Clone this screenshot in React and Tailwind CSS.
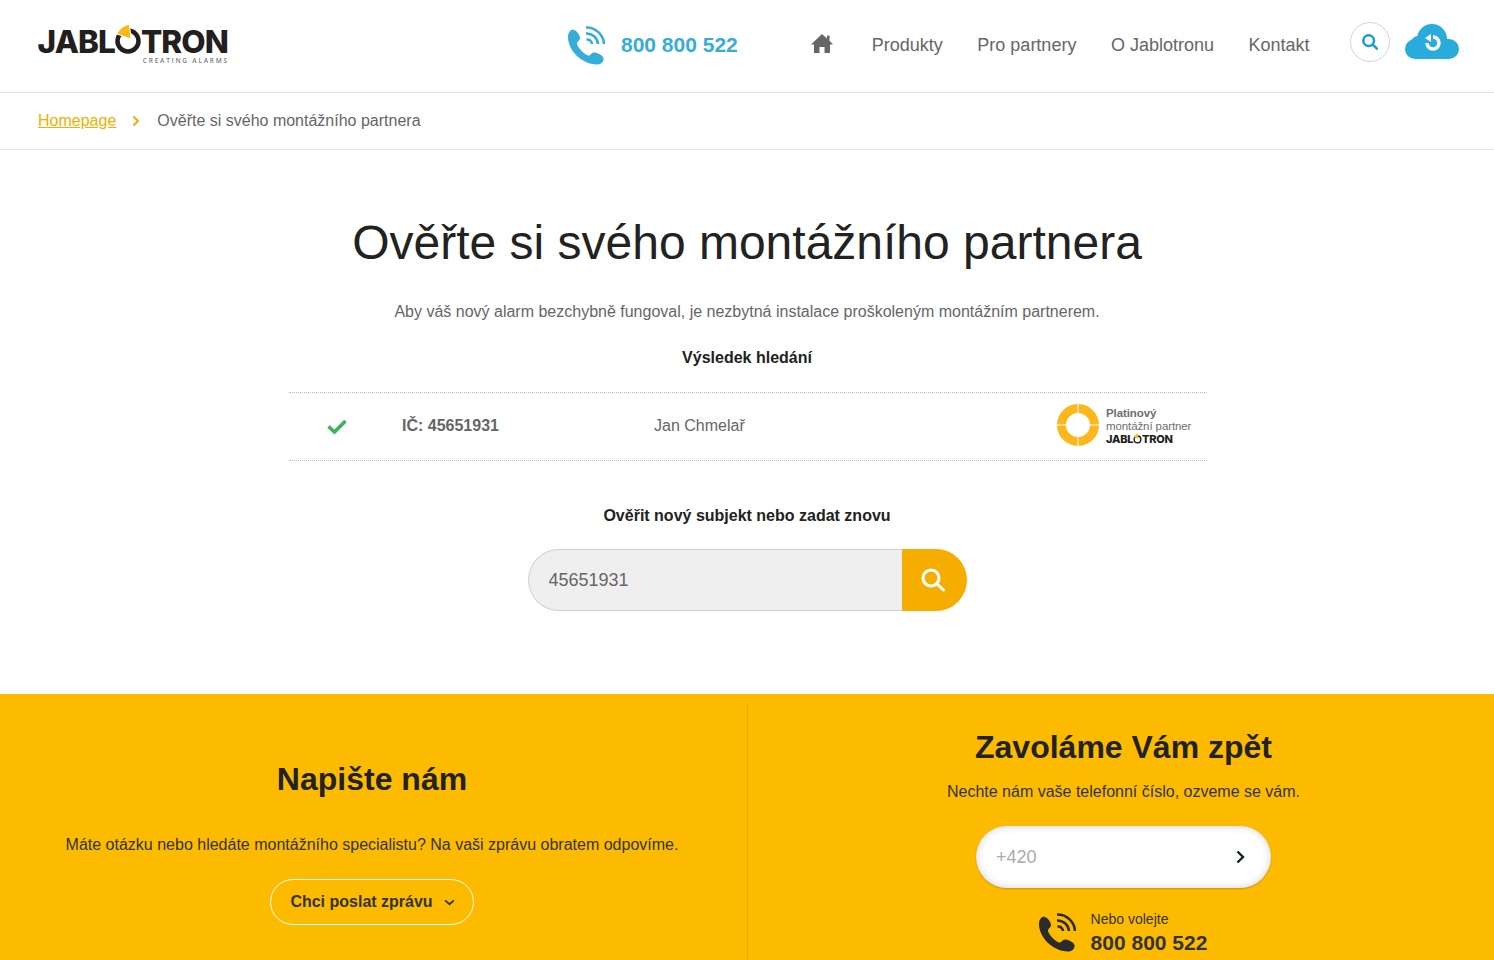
import React from "react";

function PhoneIcon({ className }) {
  return (
    <svg viewBox="0 0 38 39" className={className} fill="none">
      <path
        fill="currentColor"
        d="M6 3.500C3 4 1 7 1 11c0 13 13 27 29 27.500 4 0 7-2.500 6.500-6.500-.5-3-6.500-5.500-9.500-5.500-3 0-3 3.500-6 3-4-1.500-10-7.500-11-11.500-.5-2.500 3-3 3-6 0-3-4-8.500-7-8z"
      />
      <g stroke="currentColor" strokeWidth="2.6">
        <path d="M19 1.500A17.500 17.500 0 0 1 37 18" />
        <path d="M19 7.500A11.500 11.500 0 0 1 31 18" />
        <path d="M19.500 13.500A5 5 0 0 1 25 18" />
      </g>
    </svg>
  );
}

function SearchIcon({ className, width = 3 }) {
  return (
    <svg viewBox="0 0 24 24" className={className} fill="none" stroke="currentColor" strokeWidth={width}>
      <circle cx="10" cy="10" r="8" />
      <path d="M16 16l6.500 6" strokeLinecap="round" />
    </svg>
  );
}

function Logo() {
  return (
    <div className="flex flex-col items-end shrink-0 w-[190px] mt-[3px]">
      <div className="flex items-center h-[28px] font-['Inter',sans-serif] font-extrabold text-[31.500px] leading-[28px] tracking-[-0.9px] text-[#231f20] whitespace-nowrap">
        <span>JABL</span>
        <svg viewBox="0 0 28 32" className="w-[28px] h-[32px] mx-[-1px] mt-[-7px] shrink-0">
          <circle cx="14" cy="18" r="10.500" fill="none" stroke="#231f20" strokeWidth="4.500" />
          <path d="M15.500 1.500L17 16 3 11C5 6 10 2 15.500 1.500z" fill="#fdb913" stroke="#fff" strokeWidth="1" />
        </svg>
        <span>TRON</span>
      </div>
      <div className="mt-[1px] mr-[-1px] font-['Open_Sans',sans-serif] font-semibold text-[6.500px] leading-[8px] tracking-[1.800px] text-[#77787b] whitespace-nowrap">
        CREATING ALARMS
      </div>
    </div>
  );
}

function PartnerBadge() {
  return (
    <div className="flex items-center">
      <svg viewBox="0 0 42 42" className="w-[42px] h-[42px] shrink-0">
        <circle cx="21" cy="21" r="16.500" fill="none" stroke="#fdb71c" strokeWidth="9" />
        <path d="M21 0v11M21 31v11M0 21h11M31 21h11" stroke="#fff" strokeWidth="1" />
      </svg>
      <div className="ml-[7px] mt-[3px] w-[88px] text-[11.500px] leading-[13px] tracking-[-0.1px] text-[#6d6e71] whitespace-nowrap">
        <div className="font-bold">Platinový</div>
        <div>montážní partner</div>
        <div className="flex items-center h-[14px] font-['Inter',sans-serif] font-extrabold text-[11px] tracking-[-0.3px] text-[#231f20]">
          <span>JABL</span>
          <svg viewBox="0 0 10 12" className="w-[9px] h-[11px] mt-[-2px] shrink-0">
            <circle cx="5" cy="7" r="3.700" fill="none" stroke="#231f20" strokeWidth="1.600" />
            <path d="M5.500 1L6 6 1 4.500C2 2.500 3.500 1 5.500 1z" fill="#fdb913" />
          </svg>
          <span>TRON</span>
        </div>
      </div>
    </div>
  );
}

export default function App() {
  return (
    <div className="h-[960px] overflow-hidden bg-white font-['Liberation_Sans',Arial,sans-serif] text-base text-[#666]">
      <header className="flex items-center h-[93px] border-b border-[#e5e5e5] pl-[38px] pb-[2px] whitespace-nowrap">
        <Logo />
        <div className="flex items-center ml-[339px]">
          <PhoneIcon className="w-[38px] h-[39px] text-[#36add9]" />
          <span className="ml-[16px] text-[21px] font-bold text-[#36add9]">800 800 522</span>
        </div>
        <svg viewBox="0 0 22 19" className="ml-[73px] mb-[3px] w-[22px] h-[19px]" fill="#666">
          <path d="M11 0l5 4.500V1.500h2.500v5.300L22 10.500h-3V19h-5.500v-6h-5v6H3v-8.500H0z" />
        </svg>
        <nav className="flex gap-[34.500px] ml-[39px] text-[18px]">
          <a>Produkty</a>
          <a>Pro partnery</a>
          <a>O Jablotronu</a>
          <a>Kontakt</a>
        </nav>
        <button className="flex items-center justify-center ml-[40px] mb-[6px] w-[40px] h-[40px] rounded-full border border-[#d5d5d5]">
          <SearchIcon width={3.8} className="w-[16px] h-[16px] text-[#1b9ad6]" />
        </button>
        <svg viewBox="0 0 54 35" className="ml-[15px] mb-[7px] w-[54px] h-[35px]">
          <g fill="#29abdc">
            <circle cx="27" cy="15" r="15" />
            <circle cx="13" cy="19" r="7" />
            <circle cx="10" cy="25" r="10" />
            <circle cx="44" cy="25" r="10" />
            <rect x="10" y="15" width="34" height="20" />
          </g>
          <path d="M28 13a6 6 0 1 1-6 6" fill="none" stroke="#fff" strokeWidth="3.400" />
          <path d="M20 14l6-4v8z" fill="#fff" />
        </svg>
      </header>

      <div className="flex items-center h-[57px] border-b border-[#e5e5e5] pl-[38px]">
        <a className="text-[#f5ae00] underline">Homepage</a>
        <svg viewBox="0 0 8 12" className="ml-[16px] w-[8px] h-[12px]" fill="none" stroke="#f5ae00" strokeWidth="2">
          <path d="M1.500 1.500L6 6l-4.500 4.500" />
        </svg>
        <span className="ml-[17px]">Ověřte si svého montážního partnera</span>
      </div>

      <main className="flex flex-col items-center h-[544px]">
        <h1 className="mt-[64px] text-[48px] leading-[58px] text-[#222]">Ověřte si svého montážního partnera</h1>
        <p className="mt-[30px] leading-[20px]">
          Aby váš nový alarm bezchybně fungoval, je nezbytná instalace proškoleným montážním partnerem.
        </p>
        <h2 className="mt-[26px] font-bold leading-[20px] text-[#222]">Výsledek hledání</h2>
        <div className="flex items-center mt-[24px] ml-[2px] w-[918px] h-[69px] border-y border-dotted border-[#bbb]">
          <svg viewBox="0 0 20 16" className="ml-[38px] mt-[1px] w-[20px] h-[16px]" fill="none" stroke="#3cb55a" strokeWidth="3.600">
            <path d="M1.500 7.500l6 5.500L18.500 2" />
          </svg>
          <span className="ml-[55px] mb-[2px] w-[252px] font-bold">IČ: 45651931</span>
          <span className="mb-[2px]">Jan Chmelař</span>
          <div className="ml-auto mr-[13px] mb-[3px]">
            <PartnerBadge />
          </div>
        </div>
        <h2 className="mt-[45px] font-bold leading-[20px] text-[#222]">Ověřit nový subjekt nebo zadat znovu</h2>
        <div className="flex mt-[23px] w-[439px] h-[62px]">
          <input
            readOnly
            value="45651931"
            className="flex-1 min-w-0 pl-[20px] rounded-l-full border border-r-0 border-[#d0d0d0] bg-[#efefef] text-[18px] text-[#666] outline-none"
          />
          <button className="flex items-center justify-center w-[65px] rounded-r-full bg-[#f5ae00]">
            <SearchIcon className="w-[24px] h-[24px] mr-[2px] text-white" />
          </button>
        </div>
      </main>

      <footer className="flex h-[266px] bg-[#fdbb00] text-[#333]">
        <section className="flex flex-col items-center w-[747px] pt-[65px] pr-[3px]">
          <h2 className="text-[32px] leading-[40px] font-bold text-[#222]">Napište nám</h2>
          <p className="mt-[36px] leading-[20px]">
            Máte otázku nebo hledáte montážního specialistu? Na vaši zprávu obratem odpovíme.
          </p>
          <button className="flex items-center justify-center mt-[24px] pl-[1px] w-[204px] h-[46px] rounded-full border border-white font-bold">
            Chci poslat zprávu
            <svg viewBox="0 0 12 8" className="ml-[11px] w-[11px] h-[7px]" fill="none" stroke="#333" strokeWidth="2">
              <path d="M1 1.500l5 4.500 5-4.500" />
            </svg>
          </button>
        </section>
        <section className="flex flex-col items-center flex-1 mt-[10px] pt-[23px] pl-[5px] border-l border-[#e5a800]">
          <h2 className="text-[32px] leading-[40px] font-bold text-[#222]">Zavoláme Vám zpět</h2>
          <p className="mt-[15px] leading-[20px]">Nechte nám vaše telefonní číslo, ozveme se vám.</p>
          <div className="flex items-center mt-[24px] w-[295px] h-[62px] pl-[20px] pr-[26px] rounded-full bg-white shadow-[inset_0_0_8px_rgba(0,0,0,0.18),0_1px_2px_rgba(0,0,0,0.2)]">
            <input
              readOnly
              placeholder="+420"
              className="flex-1 min-w-0 bg-transparent text-[18px] outline-none placeholder:text-[#aaa]"
            />
            <svg viewBox="0 0 9 14" className="w-[9px] h-[14px]" fill="none" stroke="#14202b" strokeWidth="2.400">
              <path d="M1.500 1.500L7 7l-5.500 5.500" />
            </svg>
          </div>
          <div className="flex items-center mt-[22px] mr-[2px]">
            <PhoneIcon className="w-[38px] h-[39px] text-[#2b2b2b]" />
            <div className="ml-[15px]">
              <div className="text-[14px] leading-[16px] mt-[1px]">Nebo volejte</div>
              <div className="mt-[3px] text-[21px] leading-[25px] font-bold">800 800 522</div>
            </div>
          </div>
        </section>
      </footer>
    </div>
  );
}
